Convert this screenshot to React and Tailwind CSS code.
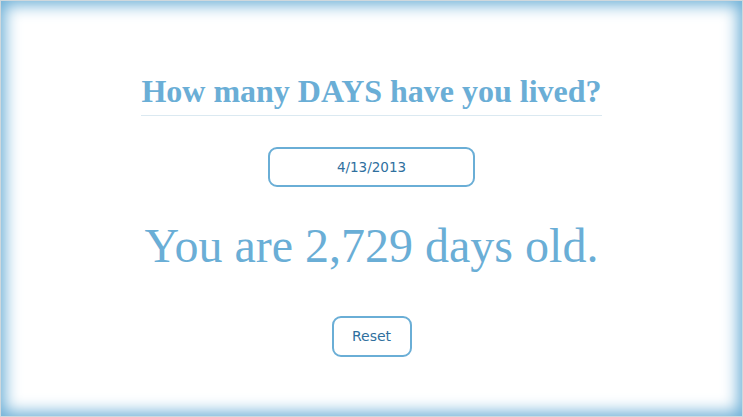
import { useState } from 'react';

const App = () => {
    const [date] = useState('4/13/2013');

    return (
        <div className="w-[743px] h-[417px] bg-white border border-[#cfd8dd] shadow-[inset_0_0_16px_4px_#6aaed6] flex flex-col items-center">
            {/* Heading */}
            <div className="mt-[72px] w-[461px] border-b border-[#dbe9f1] pb-[6px] text-center">
                <h1 className="font-['Liberation_Serif',serif] font-bold text-[32px] leading-[36px] text-[#6aaed6] whitespace-nowrap">
                    How many DAYS have you lived?
                </h1>
            </div>

            <div className="mt-[31px] w-[207px] h-[40px] border-2 border-[#6aaed6] rounded-[9px] flex items-center justify-center font-['DejaVu_Sans',sans-serif] text-[13.5px] text-[#2f6f9e]">
                {date}
            </div>

            <p className="mt-[31px] font-['Liberation_Serif',serif] text-[48px] leading-[56px] text-[#6aaed6]">
                You are 2,729 days old.
            </p>

            <button className="mt-[42px] w-[80px] h-[41px] border-2 border-[#6aaed6] rounded-[9px] bg-white font-['DejaVu_Sans',sans-serif] text-[14px] text-[#2f6f9e]">
                Reset
            </button>
        </div>
    );
};

export default App;
